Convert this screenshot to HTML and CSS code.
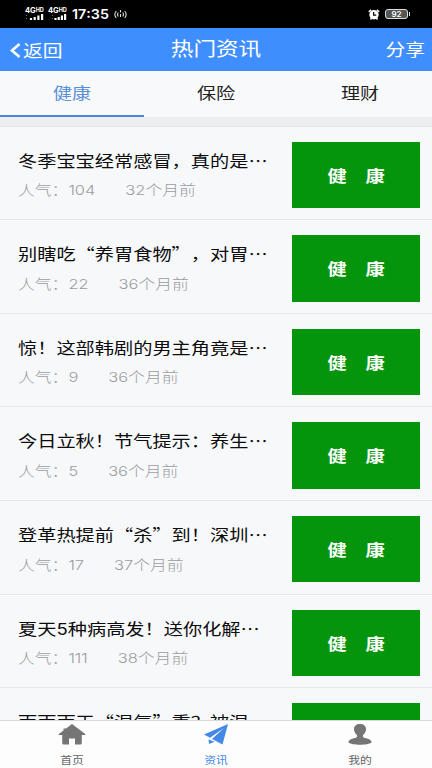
FILE: index.html
```html
<!DOCTYPE html>
<html lang="zh-CN">
<head>
<meta charset="utf-8">
<title>热门资讯</title>
<link rel="stylesheet" href="styles.css">
</head>
<body>
<div class="app">
  <div class="status">
    <div class="sim"><b>4G<sup>HD</sup></b><svg width="19" height="6" viewBox="0 0 19 6"><path d="M1.500 1v1M1.500 4v1" stroke="#777" stroke-width="1"/><path d="M6 4V6M9.700 3V6M13.400 1.500V6M17.100 0V6" stroke="#fff" stroke-width="2.200"/></svg></div>
    <div class="sim"><b>4G<sup>HD</sup></b><svg width="19" height="6" viewBox="0 0 19 6"><path d="M4.500 1v1M4.500 4v1" stroke="#777" stroke-width="1"/><path d="M7.500 4V6M10.700 3V6M13.900 1.500V6M17.100 0V6" stroke="#fff" stroke-width="2.200"/></svg></div>
    <span class="clock">17:35</span>
    <svg class="cast" width="13" height="9" viewBox="0 0 13 9" fill="none" stroke="#ddd" stroke-width="1.100"><path d="M2.300 1Q-.6 4.500 2.300 8M4.300 2.500Q2.800 4.500 4.300 6.500M10.700 1Q13.600 4.500 10.700 8M8.700 2.500Q10.200 4.500 8.700 6.500M6.500 0V2.400M6.500 4V7"/></svg>
    <svg class="alarm" width="12" height="11" viewBox="0 0 12 11"><circle cx="6" cy="5.800" r="4.700" fill="#fff"/><path d="M.8 2.800L3.200.8M8.800.8L11.200 2.800M2.500 10.500l1-1.500M9.500 10.500l-1-1.500" stroke="#fff" stroke-width="1.500"/><path d="M5.700 3V6.200H8.200" stroke="#000" stroke-width="1.200" fill="none"/></svg>
    <div class="battery">92</div>
  </div>
  <header class="bar">
    <div class="back"><svg width="11" height="15" viewBox="0 0 11 15"><path d="M9.500 1L2 7.500L9.500 14" fill="none" stroke="#fff" stroke-width="2.600"/></svg><span class="wide">返回</span></div>
    <h1>热门资讯</h1>
    <div class="share">分享</div>
  </header>
  <nav class="tabs">
    <div class="tab on"><span>健康</span></div>
    <div class="tab"><span>保险</span></div>
    <div class="tab"><span>理财</span></div>
  </nav>
  <div class="strip"></div>
  <main class="list">
    <article class="row"><div class="text"><h2>冬季宝宝经常感冒，真的是…</h2><p><span>人气：<i>104</i></span><span><i>32</i>个月前</span></p></div><div class="thumb"><span>健</span><span>康</span></div></article>
    <article class="row"><div class="text"><h2>别瞎吃“养胃食物”，对胃…</h2><p><span>人气：<i>22</i></span><span><i>36</i>个月前</span></p></div><div class="thumb"><span>健</span><span>康</span></div></article>
    <article class="row"><div class="text"><h2>惊！这部韩剧的男主角竟是…</h2><p><span>人气：<i>9</i></span><span><i>36</i>个月前</span></p></div><div class="thumb"><span>健</span><span>康</span></div></article>
    <article class="row"><div class="text"><h2>今日立秋！节气提示：养生…</h2><p><span>人气：<i>5</i></span><span><i>36</i>个月前</span></p></div><div class="thumb"><span>健</span><span>康</span></div></article>
    <article class="row"><div class="text"><h2>登革热提前“杀”到！深圳…</h2><p><span>人气：<i>17</i></span><span><i>37</i>个月前</span></p></div><div class="thumb"><span>健</span><span>康</span></div></article>
    <article class="row"><div class="text"><h2>夏天<i>5</i>种病高发！送你化解…</h2><p><span>人气：<i>111</i></span><span><i>38</i>个月前</span></p></div><div class="thumb"><span>健</span><span>康</span></div></article>
    <article class="row"><div class="text"><h2>雨雨雨天“湿气”重？被湿…</h2></div><div class="thumb"></div></article>
  </main>
  <footer class="dock">
    <div class="item"><svg width="28" height="21" viewBox="0 0 28 21"><path d="M14 0L27.600 10.200Q27.600 11 26.500 11H23.800V19Q23.800 20.500 22.300 20.500H17V14.500H11V20.500H5.700Q4.200 20.500 4.200 19V11H1.500Q.4 11 .4 10.200L5.500 6.400V4.500H8V4.500Z" fill="#757575"/></svg><span>首页</span></div>
    <div class="item on"><svg width="24" height="21" viewBox="0 0 24 21"><path d="M24 0L0 10.500L6 13.800L20 4L8 15L18.500 20.500ZM4.500 15.500L5 20L10.500 17.800Z" fill="#4488e8"/></svg><span>资讯</span></div>
    <div class="item"><svg width="24" height="21" viewBox="0 0 24 21"><path d="M12 0C16 0 18.200 2.200 18 5.500C17.800 8.500 16 10 15 11.200C14.500 13.500 16 13.800 19 14.500C22.500 15.400 23.500 16.800 23.500 18.500C20 21.500 4 21.500.5 18.500C.5 16.800 1.500 15.400 5 14.500C8 13.800 9.500 13.500 9 11.200C8 10 6.200 8.500 6 5.500C5.800 2.200 8 0 12 0Z" fill="#757575"/></svg><span>我的</span></div>
  </footer>
</div>
</body>
</html>
```
FILE: styles.css
```css
* { box-sizing: border-box; margin: 0; padding: 0; }
body {
  font-family: "Noto Sans CJK SC", sans-serif;
  background: #f7f8fa;
  overflow: hidden;
  text-spacing-trim: space-all;
  font-kerning: none;
}
.app {
  width: 432px;
  height: 768px;
  display: flex;
  flex-direction: column;
  overflow: hidden;
}
.status {
  height: 28px;
  flex: none;
  background: #000;
  color: #fff;
  display: flex;
  align-items: center;
  padding: 0 24px 0 25px;
  font-family: Inter, sans-serif;
}
.sim { width: 19px; margin-right: 4px; display: flex; flex-direction: column; }
.sim b { font-size: 7.500px; line-height: 6px; white-space: nowrap; display: flex; }
.sim sup { font-size: 5.500px; line-height: 4px; }
.clock {
  width: 38px;
  font-size: 13px;
  font-weight: 600;
  line-height: 28px;
  transform: scaleX(1.1);
  transform-origin: left;
  margin-left: 1px;
}
.cast { margin-left: 4px; }
.alarm { margin-left: auto; margin-right: 5px; }
.battery {
  position: relative;
  width: 23px;
  height: 10px;
  border: 1px solid #ddd;
  border-radius: 3px;
  background: #555;
  font-size: 8px;
  font-weight: 600;
  line-height: 8px;
  text-align: center;
}
.battery::after {
  content: "";
  position: absolute;
  right: -3px;
  top: 2px;
  width: 1.500px;
  height: 4px;
  background: #ddd;
}
.bar {
  height: 43px;
  flex: none;
  background: #3f8efe;
  color: #fff;
  display: grid;
  grid-template-columns: 1fr auto 1fr;
  align-items: center;
  padding: 0 7px 0 10px;
}
.back { display: flex; align-items: center; gap: 2px; font-size: 16.500px; line-height: 40px; }
.back svg { margin-top: 2px; }
.wide { transform: scaleX(1.2); transform-origin: left; }
.bar h1 { font-size: 19px; font-weight: 400; line-height: 38px; transform: translateX(-1px) scaleX(1.19); padding-bottom: 3px; }
.share { justify-self: end; font-size: 16.500px; transform: scaleX(1.2); transform-origin: right; line-height: 38px; padding-bottom: 2px; }
.tabs { height: 46px; flex: none; display: grid; grid-template-columns: repeat(3, 1fr); background: #f8f9fb; }
.tab { text-align: center; font-size: 16px; line-height: 42px; color: #222; }
.tab span { display: inline-block; transform: scaleX(1.19); }
.tab.on { color: #5b8fd8; border-bottom: 2px solid #4b87d8; }
.strip { height: 9.600px; flex: none; background: #edeef0; border-bottom: 1px solid #e4e5e7; }
.list { flex: 1; min-height: 0; overflow: hidden; }
.row {
  height: 93.600px;
  display: flex;
  justify-content: space-between;
  padding: 15px 12px 0 18px;
  border-bottom: 1.500px solid #e6e7ea;
}
.text { width: 208px; transform: scaleX(1.2); transform-origin: left; white-space: nowrap; }
.text h2 { height: 24px; font-size: 16px; font-weight: 400; line-height: 24px; color: #0c0c0c; margin-top: 6px; }
.text h2 i { font-size: 15.500px; line-height: 0; }
.text p { display: flex; gap: 25px; font-size: 14px; line-height: 22px; color: #9b9da0; margin-top: 6.700px; font-weight: 300; }
.text i { font-family: Inter, sans-serif; font-style: normal; }
.text p i { font-size: 13.700px; font-weight: 300; }
.thumb {
  width: 128px;
  height: 66.500px;
  background: #05950c;
  color: #fff;
  font-size: 16px;
  font-weight: 700;
  line-height: 66px;
  display: flex;
  justify-content: center;
  gap: 21px;
}
.thumb span { transform: scaleX(1.2); }
.dock {
  height: 48px;
  flex: none;
  background: #fdfdfe;
  border-top: 1px solid #d9dadc;
  display: grid;
  grid-template-columns: repeat(3, 1fr);
}
.item { display: flex; flex-direction: column; align-items: center; padding-top: 3px; color: #666; }
.item span { font-size: 10px; line-height: 14px; margin-top: 8px; transform: scaleX(1.18); }
.item.on { color: #4488e8; }
```
